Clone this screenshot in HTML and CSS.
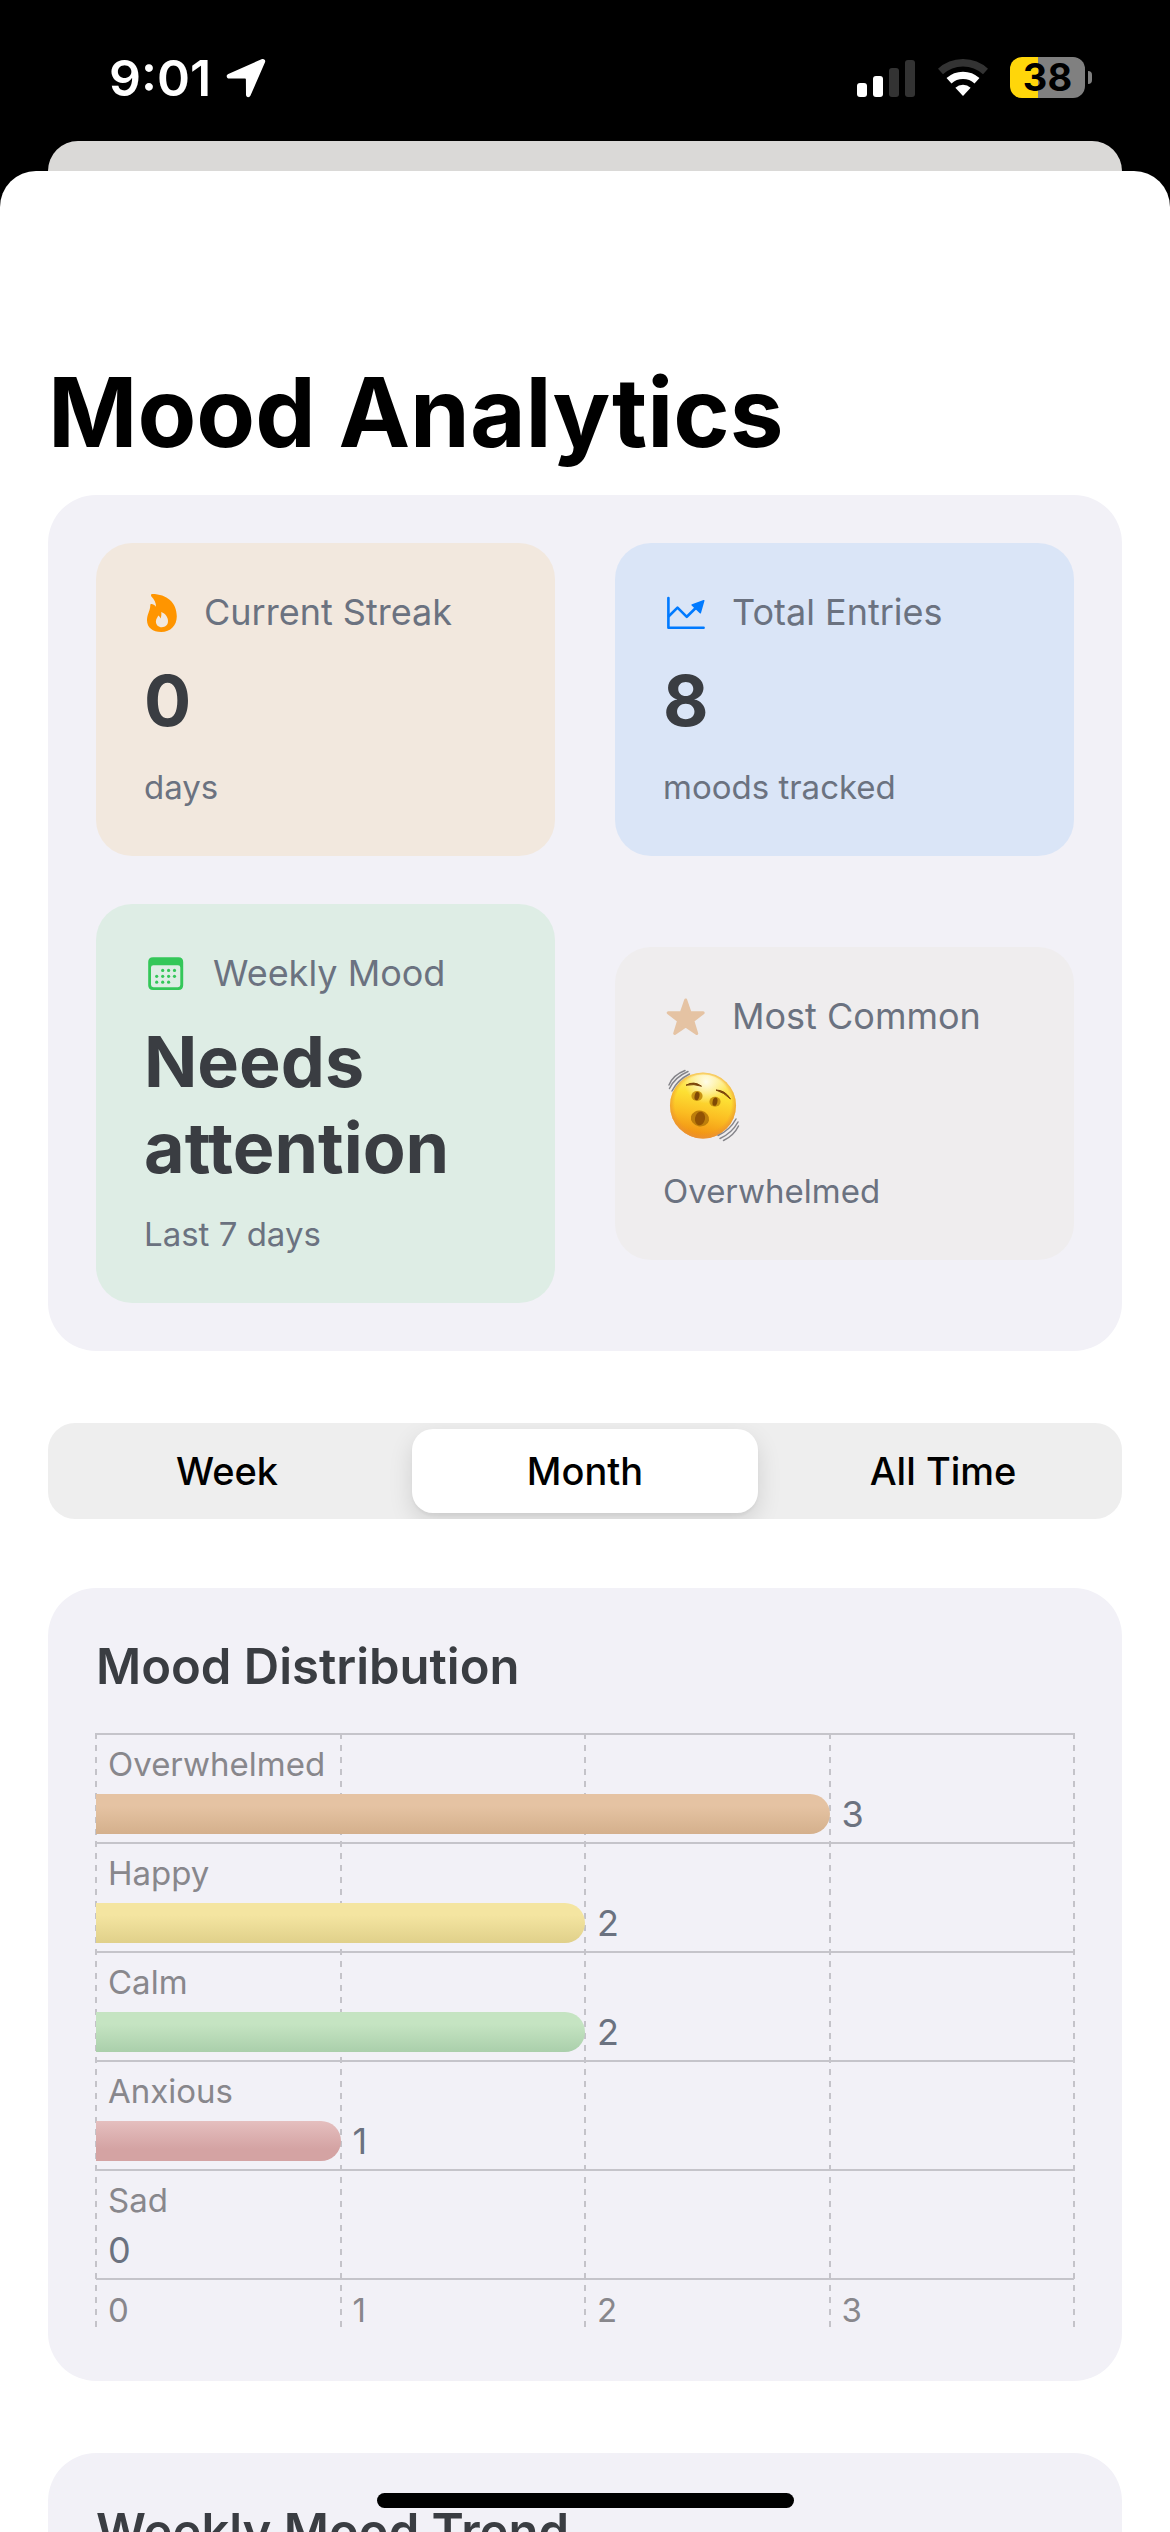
FILE: index.html
```html
<!DOCTYPE html>
<html lang="en">
<head>
<meta charset="utf-8">
<meta name="viewport" content="width=device-width, initial-scale=1">
<title>Mood Analytics</title>
<link rel="stylesheet" href="styles.css">
</head>
<body>
<header class="status">
  <div class="status-left">
    <span class="clock">9:01</span>
    <svg class="location" viewBox="0 0 40 40" aria-hidden="true"><path d="M35.500 1.200 C38 0.200 40 2 38.900 4.600 L24.500 37.600 C23.300 40.200 20 39.600 20 36.600 L19.900 21.500 Q19.900 20.600 19 20.600 L3.500 20.500 C0.300 20.500 -0.300 17 2.300 15.900 Z" fill="#fff"/></svg>
  </div>
  <div class="status-right">
    <svg class="signal" viewBox="0 0 60 38" aria-hidden="true">
      <rect x="0" y="24" width="10" height="14" rx="3" fill="#fff"/>
      <rect x="16" y="17" width="10" height="21" rx="3" fill="#fff"/>
      <rect x="32" y="9" width="10" height="29" rx="3" fill="#333"/>
      <rect x="48" y="1" width="10" height="37" rx="3" fill="#333"/>
    </svg>
    <svg class="wifi" viewBox="0 0 50 37" aria-hidden="true">
      <path d="M2.500 12.450 A33.300 33.300 0 0 1 47.500 12.450" fill="none" stroke="#333" stroke-width="7.400"/>
      <path d="M11 21.740 A20.700 20.700 0 0 1 39 21.740" fill="none" stroke="#fff" stroke-width="7.300"/>
      <path d="M17.360 28.670 A11.300 11.300 0 0 1 32.640 28.670 L25 37 Z" fill="#fff"/>
    </svg>
    <div class="battery"><span class="battery-level">38</span></div>
  </div>
</header>

<div class="sheet-behind"></div>
<main class="sheet">
  <h1 class="page-title">Mood Analytics</h1>

  <section class="panel stats">
    <article class="stat stat-streak">
      <h2 class="stat-label">
        <svg class="icon icon-narrow" viewBox="0 0 36 43" aria-hidden="true"><path fill="#ff9500" fill-rule="evenodd" d="M8.200 3 C6.800 3 6.700 4.400 7.400 5.400 C10.200 8.500 12.200 11.500 12 15.800 C10.600 14 9 13.200 7.400 13.100 C6.700 13.100 6.300 13.500 6.300 14.200 C6.300 19.500 3 23 3 29.200 C3 36.400 8.800 41 17.200 41 C26.600 41 32.800 34.600 32.800 25.300 C32.800 11.600 22.800 3 8.200 3 Z M17.800 36.200 C14.400 36.200 11.900 33.800 11.900 30.400 C11.900 27.700 13.600 26.600 14.200 24.500 C15.400 25.200 16.200 26.200 16.600 27.400 C17.400 25.400 17.600 23.200 17.200 21.100 C21.600 22.600 24 26.400 24 30 C24 34 21.500 36.200 17.800 36.200 Z"/></svg>
        Current Streak</h2>
      <p class="stat-value">0</p>
      <p class="stat-note">days</p>
    </article>

    <article class="stat stat-entries">
      <h2 class="stat-label">
        <svg class="icon" viewBox="0 0 45 43" aria-hidden="true"><g fill="none" stroke="#007aff" stroke-width="2.600" stroke-linecap="round" stroke-linejoin="round"><path d="M5.400 7 V36.700 H40.600"/><path d="M6 25 L14.500 16.600 L23.800 25.800 L34 15.800"/></g><path d="M41.500 9.800 L38 22 Q37.600 23 36.800 22.200 L28.600 14.500 Q27.800 13.600 29 13.200 L40.500 9 Q41.800 8.700 41.500 9.800 Z" fill="#007aff"/></svg>
        Total Entries</h2>
      <p class="stat-value">8</p>
      <p class="stat-note">moods tracked</p>
    </article>

    <article class="stat stat-weekly">
      <h2 class="stat-label">
        <svg class="icon" viewBox="0 0 45 43" aria-hidden="true"><path fill="#34c759" fill-rule="evenodd" d="M9 5.300 H34.500 Q39.200 5.300 39.200 10 V33.300 Q39.200 38 34.500 38 H9 Q4.200 38 4.200 33.300 V10 Q4.200 5.300 9 5.300 Z M9.400 13.300 Q7 13.300 7 15.600 V32.800 Q7 35.200 9.400 35.200 H34 Q36.300 35.200 36.300 32.800 V15.600 Q36.300 13.300 34 13.300 Z"/><g fill="#34c759"><circle cx="18.700" cy="18.400" r="1.600"/><circle cx="24.600" cy="18.400" r="1.600"/><circle cx="30.500" cy="18.400" r="1.600"/><circle cx="12.700" cy="24.300" r="1.600"/><circle cx="18.700" cy="24.300" r="1.600"/><circle cx="24.600" cy="24.300" r="1.600"/><circle cx="30.500" cy="24.300" r="1.600"/><circle cx="12.700" cy="30.200" r="1.600"/><circle cx="18.700" cy="30.200" r="1.600"/><circle cx="24.600" cy="30.200" r="1.600"/></g></svg>
        Weekly Mood</h2>
      <p class="stat-value">Needs attention</p>
      <p class="stat-note">Last 7 days</p>
    </article>

    <article class="stat stat-common">
      <h2 class="stat-label">
        <svg class="icon" viewBox="0 0 45 43" aria-hidden="true"><path d="M22.700 5 L27 17.600 L40.200 17.800 L29.800 25.700 L33.700 38.500 L22.700 31 L11.700 38.500 L15.600 25.700 L5.200 17.800 L18.400 17.600 Z" fill="#e5c3a3" stroke="#e5c3a3" stroke-width="3" stroke-linejoin="round"/></svg>
        Most Common</h2>
      <div class="stat-value">
        <svg class="face" viewBox="0 0 80 86" role="img" aria-label="Overwhelmed face">
          <defs>
            <linearGradient id="skin" x1="0.600" y1="0" x2="0.400" y2="1"><stop offset="0" stop-color="#fff08a"/><stop offset="0.350" stop-color="#fde034"/><stop offset="0.650" stop-color="#fbbd22"/><stop offset="1" stop-color="#f08a10"/></linearGradient>
            <radialGradient id="rim" cx="0.500" cy="0.480" r="0.520"><stop offset="0.820" stop-color="#f0962a" stop-opacity="0"/><stop offset="1" stop-color="#e8923a" stop-opacity="0.850"/></radialGradient>
            <radialGradient id="shine" cx="0.550" cy="0.120" r="0.350"><stop offset="0" stop-color="#fff" stop-opacity="0.850"/><stop offset="1" stop-color="#fff" stop-opacity="0"/></radialGradient>
          </defs>
          <circle cx="40" cy="43.500" r="33" fill="url(#skin)"/>
          <circle cx="40" cy="43.500" r="33" fill="url(#rim)"/>
          <circle cx="40" cy="43.500" r="31" fill="url(#shine)"/>
          <path d="M23 23.200 Q31 18.500 38.500 24.200 Q31 21.600 23 23.200 Z M53 28 Q62 28 67.500 37 Q61 30.500 53 28 Z" fill="#7a4208" stroke="#7a4208" stroke-width="1"/>
          <ellipse cx="34" cy="34" rx="5.600" ry="5" fill="#c89412"/><ellipse cx="34" cy="34" rx="2.400" ry="4.200" transform="rotate(12 34 34)" fill="#804a05"/>
          <ellipse cx="52" cy="39.700" rx="5.600" ry="5" fill="#c89412"/><ellipse cx="52" cy="39.700" rx="2.400" ry="4.200" transform="rotate(12 52 39.700)" fill="#804a05"/>
          <ellipse cx="37" cy="56.500" rx="9.200" ry="7.800" transform="rotate(12 37 56.500)" fill="#bd7e0b"/><ellipse cx="37" cy="56.500" rx="5" ry="6.800" transform="rotate(12 37 56.500)" fill="#925304"/>
          <g fill="none" stroke="#85858a" stroke-width="1.500" stroke-linecap="round"><path d="M6 23 Q10 13 22 8.500"/><path d="M6.500 26.500 Q12 15 25 9.500"/><path d="M9 29 Q14.500 18 26.500 12"/><path d="M55 73.500 Q67 68 73 57"/><path d="M57 76.500 Q69 71 75 60"/><path d="M60.500 78.500 Q71 73.500 75.500 64"/></g>
        </svg>
      </div>
      <p class="stat-note">Overwhelmed</p>
    </article>
  </section>

  <fieldset class="segments" aria-label="Time range">
    <label class="segment"><input type="radio" name="range">Week</label>
    <label class="segment"><input type="radio" name="range" checked>Month</label>
    <label class="segment"><input type="radio" name="range">All Time</label>
  </fieldset>

  <section class="panel">
    <h2 class="panel-title">Mood Distribution</h2>
    <div class="chart">
      <div class="plot">
        <div class="row"><span class="row-name">Overwhelmed</span><div class="track"><div class="bar bar-overwhelmed" style="width:75%"></div><span class="count">3</span></div></div>
        <div class="row"><span class="row-name">Happy</span><div class="track"><div class="bar bar-happy" style="width:50%"></div><span class="count">2</span></div></div>
        <div class="row"><span class="row-name">Calm</span><div class="track"><div class="bar bar-calm" style="width:50%"></div><span class="count">2</span></div></div>
        <div class="row"><span class="row-name">Anxious</span><div class="track"><div class="bar bar-anxious" style="width:25%"></div><span class="count">1</span></div></div>
        <div class="row"><span class="row-name">Sad</span><div class="track"><div class="bar" style="width:0%"></div><span class="count">0</span></div></div>
      </div>
      <div class="axis"><span>0</span><span>1</span><span>2</span><span>3</span></div>
    </div>
  </section>

  <section class="panel">
    <h2 class="panel-title">Weekly Mood Trend</h2>
  </section>
</main>
<div class="home-indicator"></div>
</body>
</html>
```
FILE: styles.css
```css
* {
  box-sizing: border-box;
}

html {
  background: #000;
}

body {
  margin: 0;
  height: 100vh;
  display: flex;
  flex-direction: column;
  overflow: hidden;
  font-family: Inter, "Liberation Sans", sans-serif;
  color: #3a3d42;
}

h1,
h2,
p {
  margin: 0;
}

/* Status bar */
.status {
  flex: none;
  display: flex;
  justify-content: space-between;
  align-items: center;
  height: 141px;
  padding: 14px 78px 0 109px;
}

.status-left,
.status-right {
  display: flex;
  align-items: center;
}

.status-left {
  gap: 15px;
}

.clock {
  color: #fff;
  font-size: 50px;
  line-height: 60px;
  font-weight: 600;
}

.location {
  width: 40px;
  height: 40px;
}

.signal {
  width: 60px;
  height: 38px;
}

.wifi {
  width: 50px;
  height: 37px;
  margin: 0 22px 0 21px;
}

.battery {
  display: flex;
  align-items: center;
  gap: 3px;
}

.battery::after {
  content: "";
  width: 4px;
  height: 13px;
  border-radius: 0 4px 4px 0;
  background: #808080;
}

.battery-level {
  width: 75px;
  height: 41px;
  border-radius: 12px;
  background: linear-gradient(90deg, #ffd60a 38%, #808080 38%);
  color: #000;
  font-size: 38px;
  line-height: 41px;
  font-weight: 700;
  text-align: center;
}

/* Sheets */
.sheet-behind {
  flex: none;
  height: 30px;
  margin: 0 48px;
  border-radius: 30px 30px 0 0;
  background: #dad9d7;
}

.sheet {
  flex: 1;
  min-height: 0;
  overflow: hidden;
  padding: 180px 48px 0;
  border-radius: 36px 36px 0 0;
  background: #fff;
}

.page-title {
  padding-bottom: 21px;
  color: #000;
  font-size: 96px;
  line-height: 123px;
  font-weight: 700;
}

.panel {
  margin-bottom: 72px;
  padding: 48px;
  border-radius: 48px;
  background: #f2f1f7;
}

/* Summary cards */
.stats {
  display: grid;
  grid-template-columns: 1fr 1fr;
  gap: 48px 60px;
  align-items: center;
}

.stat {
  display: flex;
  flex-direction: column;
  gap: 24px;
  padding: 48px;
  border-radius: 36px;
}

.stat-streak {
  background: #f2e8de;
}

.stat-entries {
  background: #dae5f7;
}

.stat-weekly {
  background: #deede5;
}

.stat-common {
  background: #efedee;
}

.stat-label {
  display: flex;
  gap: 24px;
  color: #6b7280;
  font-size: 36px;
  line-height: 43px;
  font-weight: 400;
  white-space: nowrap;
}

.icon {
  flex: none;
  width: 45px;
  height: 43px;
}

.icon-narrow {
  width: 36px;
}

.stat-value {
  font-size: 70px;
  line-height: 86px;
  font-weight: 700;
}

.face {
  display: block;
  width: 80px;
  height: 86px;
}

.stat-note {
  padding-bottom: 2px;
  color: #6b7280;
  font-size: 33px;
  line-height: 38px;
}

/* Time range */
.segments {
  display: grid;
  grid-template-columns: repeat(3, 1fr);
  gap: 12px;
  height: 96px;
  margin: 0 0 69px;
  padding: 6px;
  border: 0;
  border-radius: 27px;
  background: #eee;
  overflow: hidden;
}

.segment {
  display: flex;
  justify-content: center;
  align-items: center;
  border-radius: 21px;
  color: #000;
  font-size: 38px;
  font-weight: 500;
}

.segment input {
  appearance: none;
  width: 0;
  height: 0;
  margin: 0;
}

.segment:has(input:checked) {
  background: #fff;
  box-shadow: 0 9px 24px rgba(0, 0, 0, 0.12), 0 3px 3px rgba(0, 0, 0, 0.04);
}

/* Distribution chart */
.panel-title {
  margin-bottom: 36px;
  font-size: 49px;
  line-height: 61px;
  font-weight: 600;
}

.chart {
  position: relative;
  height: 600px;
}

/* Dashed value lines, one per quarter of the width */
.chart::before {
  content: "";
  position: absolute;
  inset: 0 -1px 6px;
  background:
    linear-gradient(#c4c3c9, #c4c3c9) 0 0 / 2px 100%,
    linear-gradient(#c4c3c9, #c4c3c9) 25% 0 / 2px 100%,
    linear-gradient(#c4c3c9, #c4c3c9) 50% 0 / 2px 100%,
    linear-gradient(#c4c3c9, #c4c3c9) 75% 0 / 2px 100%,
    linear-gradient(#c4c3c9, #c4c3c9) 100% 0 / 2px 100%;
  background-repeat: no-repeat;
  -webkit-mask-image: repeating-linear-gradient(#000 0 6px, transparent 6px 12px);
  mask-image: repeating-linear-gradient(#000 0 6px, transparent 6px 12px);
}

.plot {
  position: relative;
  display: grid;
  grid-template-rows: repeat(5, 1fr);
  height: 547px;
  border-bottom: 2px solid #c5c4ca;
}

.row {
  display: flex;
  flex-direction: column;
  border-top: 2px solid #c5c4ca;
}

.row-name {
  padding: 9px 12px 10px;
  color: #88878c;
  font-size: 33px;
  line-height: 40px;
}

.track {
  display: flex;
  align-items: center;
  height: 40px;
}

.bar {
  height: 40px;
  border-radius: 0 20px 20px 0;
}

.bar-overwhelmed {
  background: linear-gradient(#e5c3a3 30%, #d4b08c);
}

.bar-happy {
  background: linear-gradient(#f4e5a1 30%, #e0d08a);
}

.bar-calm {
  background: linear-gradient(#c5e4c2 30%, #aacfab);
}

.bar-anxious {
  background: linear-gradient(#e5bfbf, #d4a3a3 70%);
}

.count {
  padding-left: 12px;
  color: #6b7280;
  font-size: 36px;
  line-height: 40px;
}

.axis {
  position: relative;
  display: grid;
  grid-template-columns: repeat(4, 1fr);
  padding-top: 10px;
  color: #88878c;
  font-size: 33px;
  line-height: 40px;
}

.axis span {
  padding-left: 12px;
}

.home-indicator {
  position: fixed;
  bottom: 24px;
  left: 50%;
  width: 417px;
  height: 15px;
  margin-left: -208px;
  border-radius: 8px;
  background: #000;
}
```
